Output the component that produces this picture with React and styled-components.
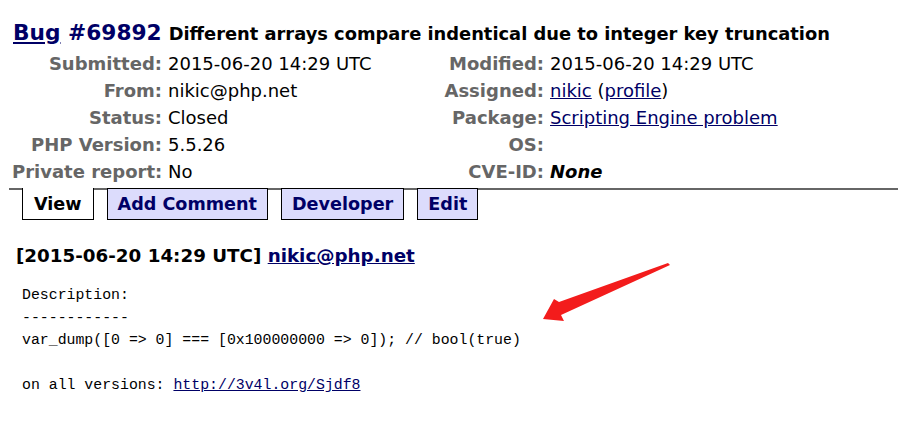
import React from "react";
import styled, { createGlobalStyle } from "styled-components";

const GlobalStyle = createGlobalStyle`
  body {
    margin: 0;
    background: #fff;
    font-family: "DejaVu Sans", Verdana, sans-serif;
    color: #000;
  }
`;

const Page = styled.div`
  position: relative;
  width: 898px;
  height: 434px;
  overflow: hidden;
  padding: 20px 0 0 0;
  box-sizing: border-box;
`;

const Title = styled.h1`
  margin: 0 0 0 13px;
  display: flex;
  align-items: baseline;
  gap: 7px;
  white-space: nowrap;
`;

const BugNo = styled.span`
  font-size: 21.7px;
  font-weight: bold;
  color: #000066;

  a {
    color: #000066;
  }
`;

const Summary = styled.span`
  font-size: 17.85px;
  font-weight: bold;
`;

const Details = styled.div`
  display: grid;
  grid-template-columns: 150px 220px 150px 1fr;
  column-gap: 6px;
  margin: 5px 0 0 12px;
  grid-auto-rows: 27px;
  align-items: center;
  font-size: 18px;
`;

const Label = styled.div`
  text-align: right;
  font-weight: bold;
  color: #666;
  white-space: nowrap;
`;

const Value = styled.div`
  white-space: nowrap;
  font-style: ${(p) => (p.$em ? "italic" : "normal")};
  font-weight: ${(p) => (p.$em ? "bold" : "normal")};
`;

const Link = styled.a`
  color: #000066;
  text-decoration: underline;
`;

const Tabs = styled.div`
  display: flex;
  gap: 13px;
  margin: 3px 0 0 9px;
  padding-left: 13px;
  border-top: 2px solid #666;
`;

const Tab = styled.div`
  margin-top: -2px;
  height: 32px;
  box-sizing: border-box;
  padding: 0 ${(p) => (p.$active ? "11px" : "10px")};
  display: flex;
  align-items: center;
  border: 1px solid #000;
  border-top: ${(p) => (p.$active ? "none" : "1px solid #000")};
  background: ${(p) => (p.$active ? "#fff" : "#dcdcfc")};
  color: ${(p) => (p.$active ? "#000" : "#000066")};
  font-size: 17.6px;
  font-weight: bold;
`;

const CommentHead = styled.h2`
  margin: 25px 0 0 16px;
  font-size: 18.3px;
  font-weight: bold;
`;

const Pre = styled.pre`
  margin: 18px 0 0 22px;
  font-family: "Liberation Mono", "DejaVu Sans Mono", monospace;
  font-size: 14.85px;
  line-height: 22.5px;

  a {
    color: #000066;
  }
`;

const Arrow = styled.svg`
  position: absolute;
  left: 540px;
  top: 262px;
`;

export default function App() {
  return (
    <Page>
      <GlobalStyle />
      <Title>
        <BugNo>
          <a href="#">Bug</a> #69892
        </BugNo>
        <Summary>Different arrays compare indentical due to integer key truncation</Summary>
      </Title>
      <Details>
        <Label>Submitted:</Label>
        <Value>2015-06-20 14:29 UTC</Value>
        <Label>Modified:</Label>
        <Value>2015-06-20 14:29 UTC</Value>

        <Label>From:</Label>
        <Value>nikic@php.net</Value>
        <Label>Assigned:</Label>
        <Value>
          <Link href="#">nikic</Link> (<Link href="#">profile</Link>)
        </Value>

        <Label>Status:</Label>
        <Value>Closed</Value>
        <Label>Package:</Label>
        <Value>
          <Link href="#">Scripting Engine problem</Link>
        </Value>

        <Label>PHP Version:</Label>
        <Value>5.5.26</Value>
        <Label>OS:</Label>
        <Value />

        <Label>Private report:</Label>
        <Value>No</Value>
        <Label>CVE-ID:</Label>
        <Value $em>None</Value>
      </Details>
      <Tabs>
        <Tab $active>View</Tab>
        <Tab>Add Comment</Tab>
        <Tab>Developer</Tab>
        <Tab>Edit</Tab>
      </Tabs>
      <CommentHead>
        [2015-06-20 14:29 UTC] <Link href="#">nikic@php.net</Link>
      </CommentHead>
      <Pre>
        {"Description:\n------------\nvar_dump([0 => 0] === [0x100000000 => 0]); // bool(true)\n\non all versions: "}
        <a href="#">http://3v4l.org/Sjdf8</a>
      </Pre>
      <Arrow width="135" height="62" viewBox="0 0 135 62">
        <path
          d="M130 3 L128 1 L19 40 L14 37 L3 57 L24 59 L21 53 Z"
          fill="#f31c1c"
        />
      </Arrow>
    </Page>
  );
}
